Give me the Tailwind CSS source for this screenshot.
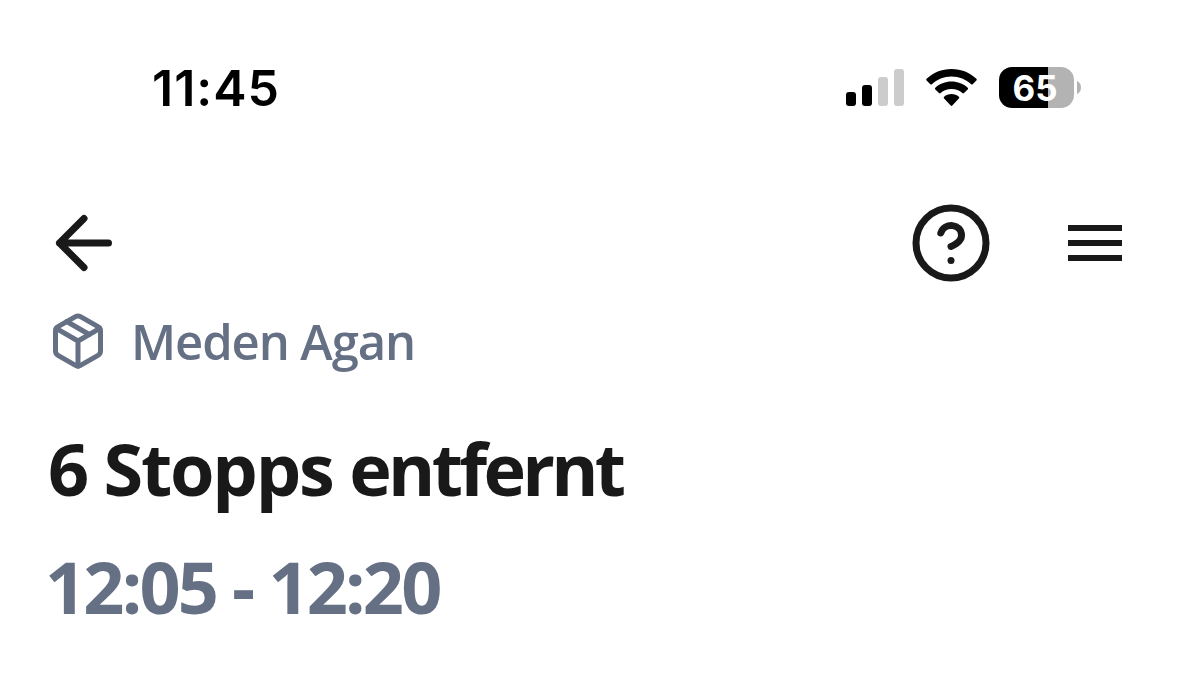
<!DOCTYPE html>
<html lang="de">
<head>
  <meta charset="UTF-8" />
  <meta name="viewport" content="width=device-width, initial-scale=1.0" />
  <title>Lieferung verfolgen</title>
  <script src="https://cdn.jsdelivr.net/npm/@tailwindcss/browser@4"></script>
</head>
<body class="bg-white min-h-screen overflow-hidden font-['Open_Sans',sans-serif] text-[#191919]">

  <!-- Status bar -->
  <div class="flex items-center justify-between h-[175px] pl-[152px] pr-[98px]">
    <span class="font-['Inter',sans-serif] font-semibold text-[50px] leading-none tracking-[1px] text-black">11:45</span>
    <div class="flex items-center">
      <!-- Signal -->
      <svg class="w-[58px] h-[37px]" viewBox="0 0 58 37">
        <rect x="0" y="23" width="10" height="14" rx="3" />
        <rect x="16" y="16" width="10" height="21" rx="3" />
        <rect x="32" y="8" width="10" height="29" rx="3" fill="#ccc" />
        <rect x="48" y="0" width="10" height="37" rx="3" fill="#ccc" />
      </svg>
      <!-- Wifi -->
      <svg class="w-[51px] h-[37px] ml-[22px]" viewBox="0 0 51 37">
        <path d="M25.5 0C35.3 0 44 3.7 50.4 9.8c.5.5.5 1.2 0 1.7l-3.7 3.7c-.5.5-1.1.5-1.6 0C40 10.4 33.1 7.5 25.5 7.5S11 10.4 5.9 15.2c-.5.5-1.1.5-1.6 0L.6 11.5c-.5-.5-.5-1.2 0-1.7C7 3.7 15.7 0 25.5 0z" />
        <path d="M25.5 12.5c6.2 0 11.9 2.3 16.2 6.2.5.5.5 1.2 0 1.7L38 24.1c-.5.5-1.1.5-1.6 0-2.9-2.6-6.7-4.1-10.9-4.1s-8 1.5-10.9 4.1c-.5.5-1.1.5-1.6 0l-3.7-3.7c-.5-.5-.5-1.2 0-1.7 4.3-3.9 10-6.2 16.2-6.2z" />
        <path d="M25.5 25c2.8 0 5.4 1 7.4 2.7.5.5.5 1.2 0 1.7l-6.600 7.2c-.5.5-1.1.5-1.6 0l-6.600-7.2c-.5-.5-.5-1.2 0-1.7 2-1.7 4.6-2.7 7.4-2.7z" />
      </svg>
      <!-- Battery -->
      <div class="ml-[22px] flex items-center justify-center w-[75px] h-[41px] pt-[2px] pr-[3px] rounded-[13px] bg-linear-to-r from-black from-65% to-[#b3b3b3] to-65%">
        <span class="font-['Inter',sans-serif] font-bold text-[35px] leading-none text-white">65</span>
      </div>
      <svg class="ml-[3px] w-[4px] h-[13px]" viewBox="0 0 4 13" fill="#b3b3b3">
        <path d="M0 0c2.500 1 4 3.500 4 6.500S2.500 12 0 13z" />
      </svg>
    </div>
  </div>

  <!-- Navigation -->
  <nav class="flex items-center justify-between h-[136px] pl-[55px] pr-[57px]">
    <svg class="w-[58px] h-[58px]" viewBox="0 0 58 58" fill="none" stroke="currentColor" stroke-width="7" stroke-linecap="round" stroke-linejoin="round">
      <path d="M53.5 29H4.5M29 4.5L4.5 29 29 53.5" />
    </svg>
    <div class="flex items-center gap-[78px]">
      <svg class="w-[78px] h-[78px]" viewBox="0 0 78 78" fill="none" stroke="currentColor" stroke-width="7" stroke-linecap="round" stroke-linejoin="round">
        <circle cx="39" cy="39" r="35" />
        <path d="M28.8 29C32.5 18 49.5 19.5 49.5 31.5c0 7.2-10.5 11-10.5 11" />
        <circle cx="39" cy="56.5" r="3.5" fill="currentColor" stroke="none" />
      </svg>
      <div class="flex flex-col gap-[9px] w-[54px]">
        <div class="h-[6px] bg-[#191919]"></div>
        <div class="h-[6px] bg-[#191919]"></div>
        <div class="h-[6px] bg-[#191919]"></div>
      </div>
    </div>
  </nav>

  <!-- Delivery info -->
  <main class="pl-[48px]">
    <div class="flex items-center h-[60px] text-[#667085]">
      <svg class="w-[60px] h-[60px]" viewBox="0 0 24 24" fill="none" stroke="currentColor" stroke-width="2" stroke-linecap="round" stroke-linejoin="round">
        <path d="M16.5 9.4l-9-5.19" />
        <path d="M21 16V8a2 2 0 0 0-1-1.73l-7-4a2 2 0 0 0-2 0l-7 4A2 2 0 0 0 3 8v8a2 2 0 0 0 1 1.73l7 4a2 2 0 0 0 2 0l7-4A2 2 0 0 0 21 16z" />
        <path d="M3.27 6.96L12 12.01l8.73-5.05M12 22.08V12" />
      </svg>
      <span class="ml-[23px] font-semibold text-[49px] leading-[60px] tracking-[-1.1px] whitespace-nowrap">Meden Agan</span>
    </div>
    <h1 class="mt-[47px] font-bold text-[72px] leading-[100px] tracking-[-2.2px] whitespace-nowrap">6 Stopps <span class="tracking-[-3.7px]">entfernt</span></h1>
    <p class="-ml-[3px] mt-[18px] font-bold text-[72px] leading-[100px] tracking-[-2.8px] whitespace-nowrap text-[#667085]">12:05 - 12:20</p>
  </main>

</body>
</html>
